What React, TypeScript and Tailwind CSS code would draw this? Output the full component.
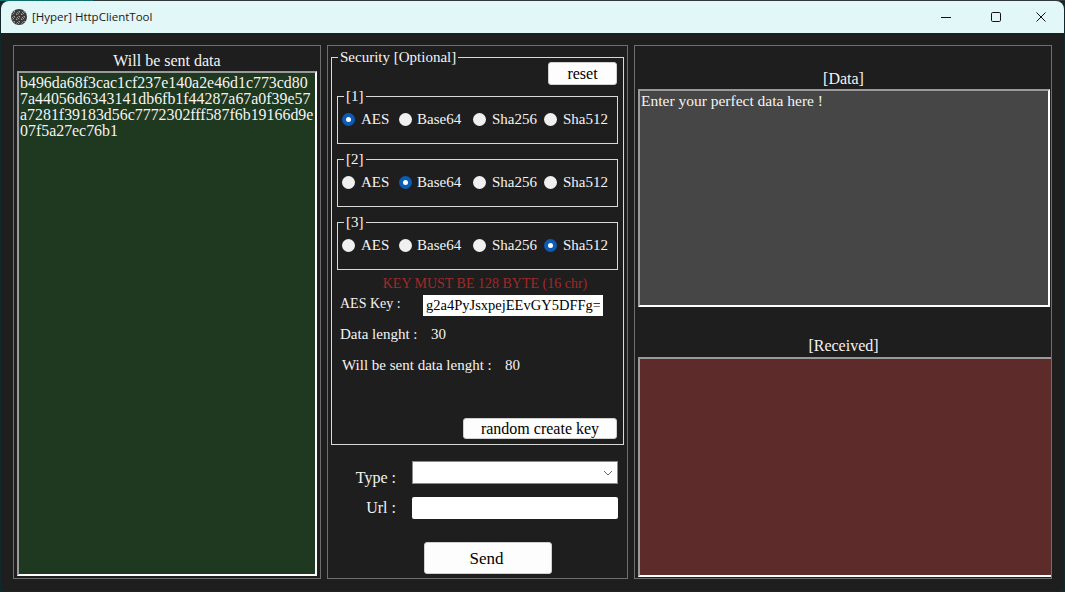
import React from "react";

const serif = "font-['Liberation_Serif',serif]";

function Radio({ on }: { on?: boolean }) {
  return on ? (
    <span className="w-[13px] h-[13px] rounded-full bg-[#0a5cb8] flex items-center justify-center shrink-0">
      <span className="w-[5px] h-[5px] rounded-full bg-white" />
    </span>
  ) : (
    <span className="w-[13px] h-[13px] rounded-full bg-[#f0f0f0] shrink-0" />
  );
}

function Group({ title, sel, className }: { title: string; sel: number; className?: string }) {
  const items = [
    { t: "AES", w: "w-[57px] gap-[6px]" },
    { t: "Base64", w: "w-[74px] gap-[5px]" },
    { t: "Sha256", w: "w-[71px] gap-[6px]" },
    { t: "Sha512", w: "w-[60px] gap-[6px]" },
  ];
  return (
    <fieldset className={`border border-[#d9d9d9] h-[56px] ml-[5px] w-[281px] pl-[4px] ${className ?? ""}`}>
      <legend className="ml-[2px] px-[2px] text-[15px] leading-[16px] h-[16px]">{title}</legend>
      <div className="flex items-center mt-[6px]">
        {items.map((it, i) => (
          <label key={it.t} className={`flex items-center ${it.w} text-[15px] leading-[18px]`}>
            <Radio on={i === sel} />
            <span>{it.t}</span>
          </label>
        ))}
      </div>
    </fieldset>
  );
}

function Minimize() {
  return (
    <svg width="12" height="12" viewBox="0 0 12 12">
      <path d="M1 6.5h10" stroke="#111" strokeWidth="1" />
    </svg>
  );
}
function Maximize() {
  return (
    <svg width="12" height="12" viewBox="0 0 12 12">
      <rect x="1.5" y="1.5" width="9" height="9" rx="1.2" fill="none" stroke="#111" strokeWidth="1" />
    </svg>
  );
}
function Close() {
  return (
    <svg width="12" height="12" viewBox="0 0 12 12">
      <path d="M1.5 1.5l9 9M10.5 1.5l-9 9" stroke="#111" strokeWidth="1" />
    </svg>
  );
}
function Logo() {
  const dots: React.ReactNode[] = [];
  for (let y = 0; y < 16; y++) {
    for (let x = 0; x < 16; x++) {
      const v = (x * 7 + y * 13 + x * y * 3) % 5;
      if (v === 0) dots.push(<rect key={`${x}-${y}`} x={x} y={y} width="1" height="1" fill="#9a9a9a" />);
      if (v === 2) dots.push(<rect key={`${x}-${y}`} x={x} y={y} width="1" height="1" fill="#6a6a6a" />);
    }
  }
  return (
    <svg width="16" height="16" viewBox="0 0 16 16">
      <defs>
        <clipPath id="logo-clip"><circle cx="8" cy="8" r="8" /></clipPath>
      </defs>
      <g clipPath="url(#logo-clip)">
        <rect width="16" height="16" fill="#3a3a3a" />
        {dots}
      </g>
    </svg>
  );
}

const inset = "border-2 border-t-[#9a9a9a] border-l-[#9a9a9a] border-r-white border-b-white";
const btn = "bg-[#fdfdfd] text-black rounded-[3px] border border-[#d0d0d0] flex items-center justify-center";

export default function App() {
  return (
    <div className="w-[1065px] h-[592px] bg-[linear-gradient(90deg,#0f6f6a_0,#0f6f6a_93px,#30383a_93px)] pt-px overflow-hidden">
      <div className="h-[591px] bg-[#10282c] pl-px">
      <div className="w-[1063px] h-[590px] bg-[#1e1e1e] rounded-t-[8px] rounded-b-[6px] flex flex-col overflow-hidden">
        <div className="h-[32px] bg-[#e2f7f7] flex items-center shrink-0 font-['Open_Sans',sans-serif]">
          <div className="ml-[10px] mr-[5px] flex"><Logo /></div>
          <span className="text-[11.5px] text-[#1a1a1a]">[Hyper] HttpClientTool</span>
          <div className="ml-auto flex items-center">
            <div className="w-[46px] flex justify-center"><Minimize /></div>
            <div className="w-[46px] ml-[4px] mr-[-1px] flex justify-center"><Maximize /></div>
            <div className="w-[46px] flex justify-center"><Close /></div>
          </div>
        </div>

        <div className={`flex gap-[6px] pl-[12px] pt-[12px] text-[#f4f4f4] ${serif}`}>
          {/* Left */}
          <section className="w-[308px] h-[534px] border border-[#6e6e6e] px-[3px] flex flex-col">
            <h2 className="h-[25px] pt-[6px] text-center text-[16px] leading-[18px] font-normal">Will be sent data</h2>
            <div className={`w-[300px] h-[505px] bg-[#1f3820] ${inset} px-[1px] pt-[2px] text-[15.9px] leading-[16px] whitespace-pre-line break-all`}>
              {"b496da68f3cac1cf237e140a2e46d1c773cd80\n7a44056d6343141db6fb1f44287a67a0f39e57\na7281f39183d56c7772302fff587f6b19166d9e\n07f5a27ec76b1"}
            </div>
          </section>

          {/* Middle */}
          <section className="w-[301px] h-[534px] border border-[#6e6e6e] pl-[3px] flex flex-col">
            <fieldset className="w-[293px] h-[396px] mt-[3px] border border-[#d9d9d9]">
              <legend className="ml-[6px] px-[2px] text-[15px] leading-[16px]">Security [Optional]</legend>
              <div className="flex justify-end pr-[6px] mt-[-3px]">
                <button className={`${btn} w-[69px] h-[23px] text-[16px]`}>reset</button>
              </div>
              <Group title="[1]" sel={0} className="mt-[3px]" />
              <Group title="[2]" sel={1} className="mt-[7px]" />
              <Group title="[3]" sel={3} className="mt-[7px]" />
              <div className="text-center text-[14px] leading-[16px] text-[#a02a2a] mt-[6px] pl-[15px]">KEY MUST BE 128 BYTE (16 chr)</div>
              <div className="flex items-center mt-[3px] pl-[8px]">
                <span className="w-[83px] text-[14px] leading-[18px] mt-[-4px]">AES Key :</span>
                <input readOnly value="g2a4PyJsxpejEEvGY5DFFg==" className="w-[180px] h-[21px] bg-white text-black text-[14.5px] px-[3px] outline-none" />
              </div>
              <div className="flex mt-[9px] pl-[8px] text-[15px] leading-[18px]">
                <span className="w-[91px]">Data lenght :</span><span>30</span>
              </div>
              <div className="flex mt-[13px] pl-[10px] text-[15px] leading-[18px]">
                <span className="w-[163px]">Will be sent data lenght :</span><span>80</span>
              </div>
              <div className="flex justify-end pr-[6px] mt-[44px]">
                <button className={`${btn} w-[154px] h-[21px] text-[16px]`}>random create key</button>
              </div>
            </fieldset>

            <div className="flex h-[23px] mt-[16px]">
              <span className="w-[65px] text-right text-[16px] leading-[18px] mt-[8px]">Type :</span>
              <div className="ml-[16px] w-[206px] h-[23px] bg-white border border-[#8a8a8a] flex items-center justify-end pr-[4px]">
                <svg width="10" height="6" viewBox="0 0 10 6"><path d="M1 1l4 4 4-4" fill="none" stroke="#666" strokeWidth="1" /></svg>
              </div>
            </div>
            <div className="flex h-[22px] mt-[13px]">
              <span className="w-[65px] text-right text-[16px] leading-[18px] mt-[2px]">Url :</span>
              <input readOnly className="ml-[16px] w-[206px] h-[22px] bg-white rounded-[2px] outline-none" />
            </div>
            <div className="flex mt-[23px] pl-[93px]">
              <button className={`${btn} w-[128px] h-[32px] text-[17px] pr-[3px] pt-[2px]`}>Send</button>
            </div>
          </section>

          {/* Right */}
          <section className="w-[418px] h-[534px] border border-[#6e6e6e] pl-[3px] flex flex-col">
            <h2 className="h-[43px] pt-[24px] w-[411px] text-center text-[16px] leading-[18px] font-normal">[Data]</h2>
            <div className={`w-[412px] h-[218px] bg-[#464646] ${inset} px-[1px] pt-[2px] text-[15.5px] leading-[16px]`}>
              Enter your perfect data here !
            </div>
            <h2 className="h-[50px] pt-[30px] w-[411px] text-center text-[16px] leading-[18px] font-normal">[Received]</h2>
            <div className={`w-[413px] h-[220px] bg-[#5e2b2b] ${inset} border-r-0`} />
          </section>
        </div>
      </div>
      </div>
    </div>
  );
}
